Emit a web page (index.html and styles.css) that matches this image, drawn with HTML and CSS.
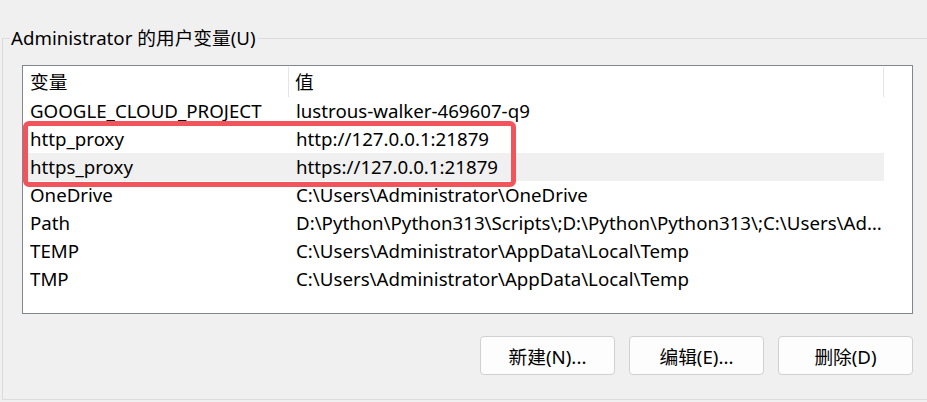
FILE: index.html
```html
<!DOCTYPE html>
<html lang="zh-CN">
<head>
<meta charset="utf-8">
<title>环境变量</title>
<link rel="stylesheet" href="styles.css">
</head>
<body>
<fieldset class="group">
  <legend class="group-title">Administrator 的用户变量(U)</legend>
  <div class="listview">
    <div class="lv-header">
      <div class="col-name">变量</div>
      <div class="col-value">值</div>
    </div>
    <div class="lv-row"><div class="col-name">GOOGLE_CLOUD_PROJECT</div><div class="col-value">lustrous-walker-469607-q9</div></div>
    <div class="lv-row"><div class="col-name">http_proxy</div><div class="col-value">http://127.0.0.1:21879</div></div>
    <div class="lv-row is-selected"><div class="col-name">https_proxy</div><div class="col-value">https://127.0.0.1:21879</div></div>
    <div class="lv-row"><div class="col-name">OneDrive</div><div class="col-value">C:\Users\Administrator\OneDrive</div></div>
    <div class="lv-row"><div class="col-name">Path</div><div class="col-value">D:\Python\Python313\Scripts\;D:\Python\Python313\;C:\Users\Administrator\AppData\Local\Microsoft\WindowsApps</div></div>
    <div class="lv-row"><div class="col-name">TEMP</div><div class="col-value">C:\Users\Administrator\AppData\Local\Temp</div></div>
    <div class="lv-row"><div class="col-name">TMP</div><div class="col-value">C:\Users\Administrator\AppData\Local\Temp</div></div>
    <div class="highlight-box"></div>
  </div>
  <div class="buttons">
    <button class="btn">新建(N)...</button>
    <button class="btn">编辑(E)...</button>
    <button class="btn">删除(D)</button>
  </div>
</fieldset>
</body>
</html>
```

FILE: styles.css
```css
html, body {
  margin: 0;
  padding: 0;
  background: #f0f0f0;
  overflow: hidden;
}
body {
  width: 927px;
  height: 402px;
  font-family: "Noto Sans", "Noto Sans CJK SC", sans-serif;
  font-size: 18.7px;
  color: #000;
}
.group {
  margin: 26px -30px 0 2px;
  padding: 0 0 23px 0;
  border: 1px solid #dcdcdc;
  height: 374px;
  box-sizing: border-box;
}
.group-title {
  margin-left: 7px;
  padding: 0 2px 0 1px;
  line-height: 24px;
  height: 24px;
}
.listview {
  position: relative;
  margin: 15px 0 0 19px;
  width: 891px;
  height: 249px;
  box-sizing: border-box;
  border: 1px solid #82878f;
  background: #fff;
}
.lv-header, .lv-row {
  display: flex;
  width: 861px;
}
.lv-header {
  height: 31px;
}
.lv-row {
  height: 28px;
  line-height: 28px;
}
.col-name {
  width: 266px;
  padding-left: 7px;
  box-sizing: border-box;
  white-space: nowrap;
  overflow: hidden;
}
.col-value {
  flex: 1;
  padding-left: 7px;
  padding-right: 2px;
  box-sizing: border-box;
  white-space: nowrap;
  overflow: hidden;
  text-overflow: ellipsis;
}
.lv-header .col-name {
  border-right: 1px solid #e5e5e5;
}
.lv-header .col-value {
  padding-left: 6px;
  border-right: 1px solid #e5e5e5;
}
.lv-header .col-name, .lv-header .col-value {
  margin: 1px 0 0;
  height: 30px;
  line-height: 29px;
}
.lv-row.is-selected {
  background: #f0f0f0;
}
.highlight-box {
  position: absolute;
  left: 0px;
  top: 55px;
  width: 493px;
  height: 66px;
  box-sizing: border-box;
  border: 5px solid #f2545b;
  border-radius: 6px;
}
.buttons {
  display: flex;
  justify-content: flex-end;
  gap: 14px;
  width: 891px;
  margin: 22px 0 0 19px;
}
.btn {
  width: 135px;
  height: 39px;
  box-sizing: border-box;
  border: 1px solid #d0d0d0;
  border-radius: 4px;
  background: #fdfdfd;
  font-family: inherit;
  font-size: 18.7px;
  color: #000;
  padding: 0;
}
```
